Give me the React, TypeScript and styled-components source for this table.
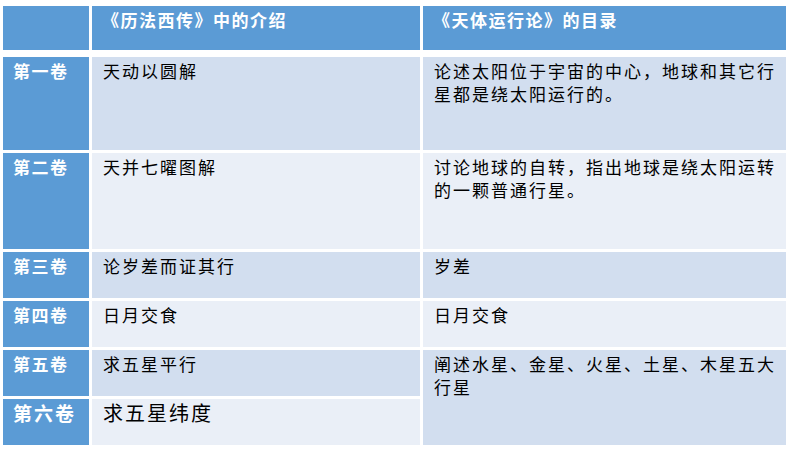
import React from "react";
import styled, { createGlobalStyle } from "styled-components";

const GlobalStyle = createGlobalStyle`
  html, body {
    margin: 0;
    padding: 0;
    background: #ffffff;
  }
  body {
    font-family: "Noto Sans CJK SC", "Noto Sans", "Liberation Sans", sans-serif;
  }
`;

const Page = styled.div`
  width: 795px;
  height: 450px;
  padding: 6px 0 0 3px;
  box-sizing: border-box;
  background: #ffffff;
`;

const Table = styled.div`
  display: grid;
  width: 783px;
  grid-template-columns: 86px 328px 363px;
  grid-template-rows: 48px 93px 96px 46px 46px 46px 46px;
  column-gap: 3px;
  row-gap: 3px;
`;

const HeadCell = styled.div`
  background: #5b9bd5;
  margin-bottom: 4px;
  padding: 2px 10px 0;
  color: #ffffff;
  font-size: 17px;
  font-weight: 700;
  letter-spacing: 1.5px;
  line-height: 23px;
`;

const VolumeCell = styled.div<{ $big?: boolean }>`
  background: #5b9bd5;
  padding: ${(p) => (p.$big ? "1px 10px 0" : "2px 10px 0")};
  color: #ffffff;
  font-size: ${(p) => (p.$big ? "19px" : "17px")};
  font-weight: 700;
  letter-spacing: ${(p) => (p.$big ? "2px" : "1.5px")};
  line-height: ${(p) => (p.$big ? "26px" : "23px")};
  white-space: nowrap;
`;

const TextCell = styled.div<{ $odd: boolean; $big?: boolean; $span?: number }>`
  background: ${(p) => (p.$odd ? "#d2deef" : "#eaeff7")};
  padding: ${(p) => (p.$big ? "1px 4px 0 11px" : "2px 4px 0 11px")};
  color: #000000;
  font-size: ${(p) => (p.$big ? "20px" : "17px")};
  letter-spacing: 2px;
  line-height: ${(p) => (p.$big ? "26px" : "23px")};
  grid-row: ${(p) => (p.$span ? `span ${p.$span}` : "auto")};
  overflow: hidden;
`;

type Row = {
  volume: string;
  intro: string;
  contents?: string;
  span?: number;
  big?: boolean;
};

const rows: Row[] = [
  {
    volume: "第一卷",
    intro: "天动以圆解",
    contents: "论述太阳位于宇宙的中心，地球和其它行星都是绕太阳运行的。",
  },
  {
    volume: "第二卷",
    intro: "天并七曜图解",
    contents: "讨论地球的自转，指出地球是绕太阳运转的一颗普通行星。",
  },
  { volume: "第三卷", intro: "论岁差而证其行", contents: "岁差" },
  { volume: "第四卷", intro: "日月交食", contents: "日月交食" },
  {
    volume: "第五卷",
    intro: "求五星平行",
    contents: "阐述水星、金星、火星、土星、木星五大行星",
    span: 2,
  },
  { volume: "第六卷", intro: "求五星纬度", big: true },
];

export default function App() {
  return (
    <>
      <GlobalStyle />
      <Page>
        <Table>
          <HeadCell />
          <HeadCell>《历法西传》中的介绍</HeadCell>
          <HeadCell>《天体运行论》的目录</HeadCell>
          {rows.map((r, i) => {
            const odd = i % 2 === 0;
            return (
              <React.Fragment key={r.volume}>
                <VolumeCell $big={r.big}>{r.volume}</VolumeCell>
                <TextCell $odd={odd} $big={r.big}>
                  {r.intro}
                </TextCell>
                {r.contents !== undefined && (
                  <TextCell $odd={odd} $span={r.span}>
                    {r.contents}
                  </TextCell>
                )}
              </React.Fragment>
            );
          })}
        </Table>
      </Page>
    </>
  );
}
